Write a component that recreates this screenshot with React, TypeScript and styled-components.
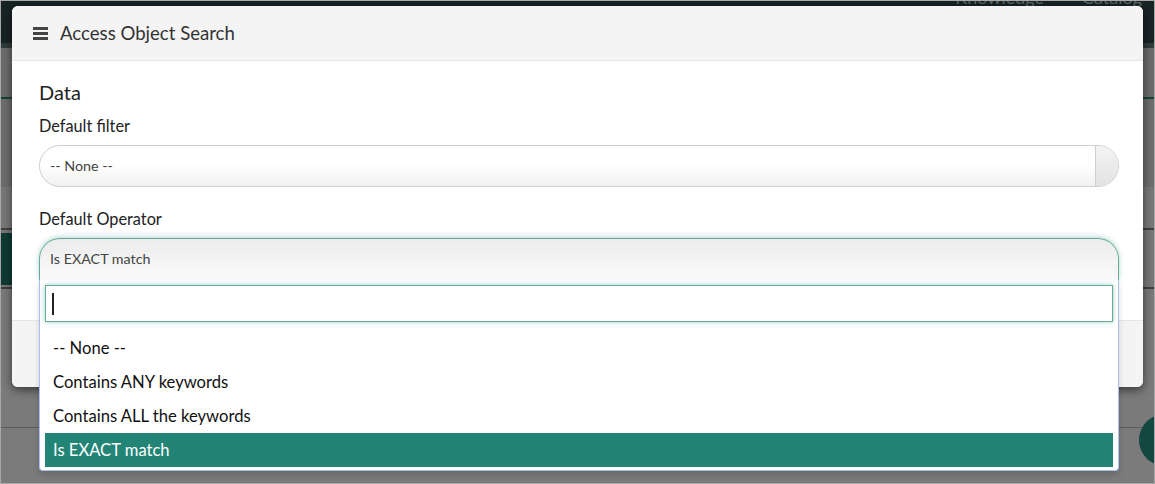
import styled, { createGlobalStyle } from 'styled-components';

const GlobalStyle = createGlobalStyle`
  html, body {
    margin: 0;
    padding: 0;
  }
  body {
    font-family: Lato, "Open Sans", sans-serif;
    background: #777;
    overflow: hidden;
  }
  * {
    box-sizing: border-box;
  }
`;

const operators = [
  '-- None --',
  'Contains ANY keywords',
  'Contains ALL the keywords',
  'Is EXACT match',
];

const App = () => {
  const selected = 'Is EXACT match';

  return (
    <>
      <GlobalStyle />
      <Frame>
        {/* page behind the modal, dimmed */}
        <BackPage>
          <TopNav>
            <NavItem>Knowledge</NavItem>
            <NavItem>Catalog</NavItem>
          </TopNav>
          <Band $h={5} $bg="#2e3c3a" />
          <Band $h={49} $bg="#6b6b6b" />
          <Band $h={2} $bg="#154438" />
          <Band $h={88} $bg="#6d6d6d" />
          <Band $h={41} $bg="#787878" />
          <Band $h={2} $bg="#3f3f3f" />
          <ListRow>
            <GreenTile />
          </ListRow>
          <Band $h={2} $bg="#3f3f3f" />
          <Band $h={138} $bg="#7a7a7a" />
          <Band $h={1} $bg="#5c5c5c" />
        </BackPage>
        <Fab />

        <Modal>
          <ModalHeader>
            <svg width="15" height="13" viewBox="0 0 15 13">
              <rect x="0" y="0" width="15" height="3" fill="#444" />
              <rect x="0" y="5" width="15" height="3" fill="#444" />
              <rect x="0" y="10" width="15" height="3" fill="#444" />
            </svg>
            <ModalTitle>Access Object Search</ModalTitle>
          </ModalHeader>

          <ModalBody>
            <SectionTitle>Data</SectionTitle>
            <FieldLabel>Default filter</FieldLabel>
            <Select>
              <SelectText>-- None --</SelectText>
              <SelectArrow />
            </Select>

            <FieldLabel $gap={22}>Default Operator</FieldLabel>
            <SelectOpen>
              <SelectText>{selected}</SelectText>
              <Dropdown>
                <SearchBox>
                  <Caret />
                </SearchBox>
                <OptionList>
                  {operators.map((op) => (
                    <Option key={op} $active={op === selected}>
                      {op}
                    </Option>
                  ))}
                </OptionList>
              </Dropdown>
            </SelectOpen>
          </ModalBody>

          <ModalFooter />
        </Modal>
      </Frame>
    </>
  );
};

export default App;

const Frame = styled.div`
  position: relative;
  width: 1155px;
  height: 484px;
  border: 1px solid #a8a8a8;
  background: #7b7b7b;
  overflow: hidden;
`;

const BackPage = styled.div`
  display: flex;
  flex-direction: column;
`;

const TopNav = styled.div`
  height: 42px;
  background: #182325;
  display: flex;
  align-items: flex-start;
  justify-content: flex-end;
  gap: 38px;
  padding-right: 12px;
  overflow: hidden;
`;

const NavItem = styled.span`
  margin-top: -15px;
  font-size: 18px;
  color: #5b6465;
`;

const Band = styled.div<{ $h: number; $bg: string }>`
  height: ${({ $h }) => $h}px;
  background: ${({ $bg }) => $bg};
`;

const ListRow = styled.div`
  height: 57px;
  background: #777;
  padding-top: 3px;
`;

const GreenTile = styled.div`
  width: 200px;
  height: 52px;
  background: #0f3b33;
`;

const Fab = styled.div`
  position: absolute;
  top: 413px;
  right: -37px;
  width: 52px;
  height: 52px;
  border-radius: 50%;
  background: #124840;
`;

const Modal = styled.div`
  position: absolute;
  left: 11px;
  top: 5px;
  width: 1131px;
  height: 381px;
  background: #fff;
  border-radius: 6px;
  box-shadow: 0 3px 10px rgba(0, 0, 0, 0.55);
  display: flex;
  flex-direction: column;
`;

const ModalHeader = styled.div`
  height: 55px;
  flex-shrink: 0;
  background: #f4f4f4;
  border-bottom: 1px solid #e2e8e7;
  border-radius: 6px 6px 0 0;
  display: flex;
  align-items: center;
  gap: 12px;
  padding-left: 21px;
`;

const ModalTitle = styled.h1`
  margin: 0;
  font-size: 18.6px;
  font-weight: 400;
  color: #333;
`;

const ModalBody = styled.div`
  flex: 1;
  padding: 19px 24px 0 27px;
`;

const SectionTitle = styled.h2`
  margin: 0;
  font-size: 20px;
  line-height: 24px;
  font-weight: 400;
  color: #222;
`;

const FieldLabel = styled.div<{ $gap?: number }>`
  margin-top: ${({ $gap }) => $gap ?? 12}px;
  margin-bottom: 9px;
  font-size: 16.3px;
  line-height: 20px;
  color: #222;
`;

const Select = styled.div`
  height: 42px;
  display: flex;
  align-items: stretch;
  border: 1px solid #cfcfcf;
  border-radius: 21px;
  overflow: hidden;
  background: linear-gradient(to bottom, #fff 0%, #fff 45%, #f1f1f1 100%);
`;

const SelectText = styled.div`
  flex: 1;
  padding-left: 10px;
  font-size: 14.3px;
  line-height: 40px;
  color: #444;
`;

const SelectArrow = styled.div`
  width: 23px;
  border-left: 1px solid #cfcfcf;
  background: linear-gradient(to bottom, #f4f4f4 0%, #e2e2e2 100%);
`;

const SelectOpen = styled.div`
  position: relative;
  height: 42px;
  display: flex;
  border: 1px solid #64ab9b;
  border-bottom: none;
  border-radius: 21px 21px 0 0;
  background: linear-gradient(to bottom, #ececec 0%, #f3f3f3 50%, #fbfbfb 100%);
  box-shadow: 0 -1px 5px rgba(33, 132, 117, 0.35);
`;

const Dropdown = styled.div`
  position: absolute;
  top: 100%;
  left: -1px;
  right: -1px;
  z-index: 5;
  background: #fff;
  border: 1px solid #a9c0ee;
  border-top: none;
  border-radius: 0 0 4px 4px;
  padding: 5px 5px 3px;
  box-shadow: 0 4px 6px rgba(0, 0, 0, 0.15);
`;

const SearchBox = styled.div`
  height: 37px;
  border: 1px solid #66ac9b;
  box-shadow: 0 0 4px rgba(33, 132, 117, 0.45);
  background: #fff;
  display: flex;
  align-items: center;
  padding-left: 6px;
`;

const Caret = styled.div`
  width: 1.5px;
  height: 22px;
  background: #222;
`;

const OptionList = styled.ul`
  list-style: none;
  margin: 9px 0 0;
  padding: 0;
`;

const Option = styled.li<{ $active: boolean }>`
  height: 34px;
  line-height: 34px;
  padding-left: 8px;
  font-size: 16.6px;
  color: ${({ $active }) => ($active ? '#fff' : '#111')};
  background: ${({ $active }) => ($active ? '#218475' : 'transparent')};
`;

const ModalFooter = styled.div`
  height: 67px;
  flex-shrink: 0;
  background: #f4f4f4;
  border-top: 1px solid #e6e6e6;
  border-radius: 0 0 6px 6px;
`;
